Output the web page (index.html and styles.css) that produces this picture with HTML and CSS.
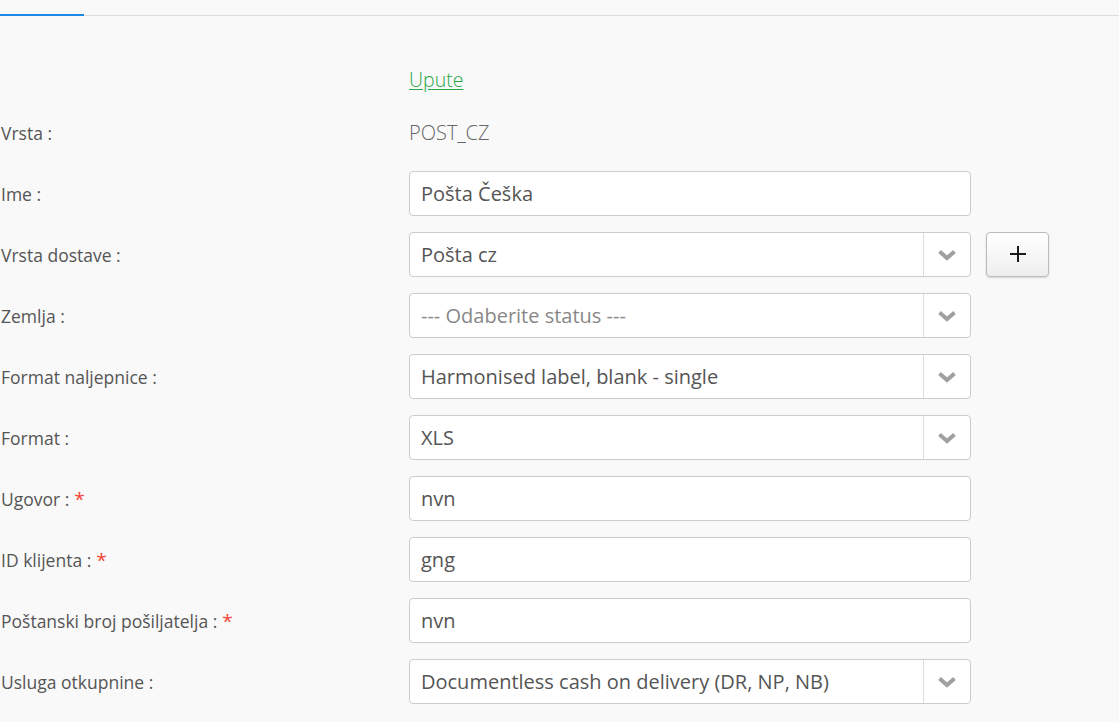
FILE: index.html
```html
<!DOCTYPE html>
<html lang="hr">
<head>
<meta charset="utf-8">
<title>Dostava</title>
<link rel="stylesheet" href="styles.css">
</head>
<body>
<nav class="tabs">
  <div class="tab active"></div>
</nav>
<form class="form">
  <div class="label"></div>
  <div class="value link-row"><a href="#" class="link">Upute</a></div>
  <div class="extra"></div>

  <div class="label">Vrsta :</div>
  <div class="value static">POST_CZ</div>
  <div class="extra"></div>

  <div class="label">Ime :</div>
  <div class="value"><div class="input">Pošta Češka</div></div>
  <div class="extra"></div>

  <div class="label">Vrsta dostave :</div>
  <div class="value"><div class="select"><span class="sel-text">Pošta cz</span><span class="sel-arrow"><svg width="20" height="12" viewBox="0 0 20 12"><path d="M2.5 2.5 L10 9 L17.5 2.5" fill="none" stroke="#a0a0a0" stroke-width="4"/></svg></span></div></div>
  <div class="extra"><button type="button" class="btn-add" aria-label="Dodaj"><svg width="18" height="18" viewBox="0 0 18 18"><path d="M9 1 V17 M1 9 H17" fill="none" stroke="#1a1a1a" stroke-width="2"/></svg></button></div>

  <div class="label">Zemlja :</div>
  <div class="value"><div class="select"><span class="sel-text placeholder">--- Odaberite status ---</span><span class="sel-arrow"><svg width="20" height="12" viewBox="0 0 20 12"><path d="M2.5 2.5 L10 9 L17.5 2.5" fill="none" stroke="#a0a0a0" stroke-width="4"/></svg></span></div></div>
  <div class="extra"></div>

  <div class="label">Format naljepnice :</div>
  <div class="value"><div class="select"><span class="sel-text">Harmonised label, blank - single</span><span class="sel-arrow"><svg width="20" height="12" viewBox="0 0 20 12"><path d="M2.5 2.5 L10 9 L17.5 2.5" fill="none" stroke="#a0a0a0" stroke-width="4"/></svg></span></div></div>
  <div class="extra"></div>

  <div class="label">Format :</div>
  <div class="value"><div class="select"><span class="sel-text">XLS</span><span class="sel-arrow"><svg width="20" height="12" viewBox="0 0 20 12"><path d="M2.5 2.5 L10 9 L17.5 2.5" fill="none" stroke="#a0a0a0" stroke-width="4"/></svg></span></div></div>
  <div class="extra"></div>

  <div class="label">Ugovor : <span class="req">*</span></div>
  <div class="value"><div class="input">nvn</div></div>
  <div class="extra"></div>

  <div class="label">ID klijenta : <span class="req">*</span></div>
  <div class="value"><div class="input">gng</div></div>
  <div class="extra"></div>

  <div class="label">Poštanski broj pošiljatelja : <span class="req">*</span></div>
  <div class="value"><div class="input">nvn</div></div>
  <div class="extra"></div>

  <div class="label">Usluga otkupnine :</div>
  <div class="value"><div class="select"><span class="sel-text">Documentless cash on delivery (DR, NP, NB)</span><span class="sel-arrow"><svg width="20" height="12" viewBox="0 0 20 12"><path d="M2.5 2.5 L10 9 L17.5 2.5" fill="none" stroke="#a0a0a0" stroke-width="4"/></svg></span></div></div>
  <div class="extra"></div>
</form>
</body>
</html>
```

FILE: styles.css
```css
html, body {
  margin: 0;
  padding: 0;
  background: #f9f9f9;
  font-family: "Open Sans", "Liberation Sans", sans-serif;
  color: #555;
}

.tabs {
  height: 15px;
  border-bottom: 1px solid #dddddd;
  display: flex;
}

.tab {
  width: 84px;
}

.tab.active {
  border-bottom: 2px solid #1e88e5;
  margin-bottom: -1px;
}

.form {
  display: grid;
  grid-template-columns: 409px 562px auto;
  grid-auto-rows: 45px;
  row-gap: 16px;
  padding-top: 33px;
}

.label {
  display: flex;
  align-items: center;
  font-size: 17.5px;
  color: #555;
  padding-left: 1px;
  white-space: nowrap;
}

.req {
  color: #f44336;
  margin-left: 5px;
  font-size: 19px;
}

.value {
  display: flex;
  align-items: center;
}

.link-row {
  align-items: flex-end;
}

.link {
  font-size: 19.5px;
  font-weight: 300;
  color: #28a745;
  text-decoration: underline;
  text-underline-offset: 2px;
  line-height: 26px;
  margin-bottom: 1px;
}

.static {
  font-size: 20px;
  font-weight: 300;
  color: #666;
}

.input, .select {
  box-sizing: border-box;
  width: 562px;
  height: 45px;
  background: #fff;
  border: 1px solid #cccccc;
  border-radius: 4px;
  display: flex;
  align-items: center;
  font-size: 20px;
  color: #555;
}

.input {
  padding: 0 11px;
}

.sel-text {
  flex: 1;
  padding: 0 11px;
  white-space: nowrap;
}

.placeholder {
  color: #888;
}

.sel-arrow {
  width: 46px;
  height: 100%;
  border-left: 1px solid #dddddd;
  display: flex;
  align-items: center;
  justify-content: center;
}

.extra {
  display: flex;
  align-items: center;
  padding-left: 15px;
}

.btn-add {
  width: 63px;
  height: 45px;
  border: 1px solid #bbbbbb;
  border-radius: 4px;
  background: linear-gradient(#ffffff, #eeeeee);
  box-shadow: 0 1px 2px rgba(0,0,0,0.15);
  display: flex;
  align-items: center;
  justify-content: center;
  padding: 0 0 2px 0;
  cursor: pointer;
}
```
